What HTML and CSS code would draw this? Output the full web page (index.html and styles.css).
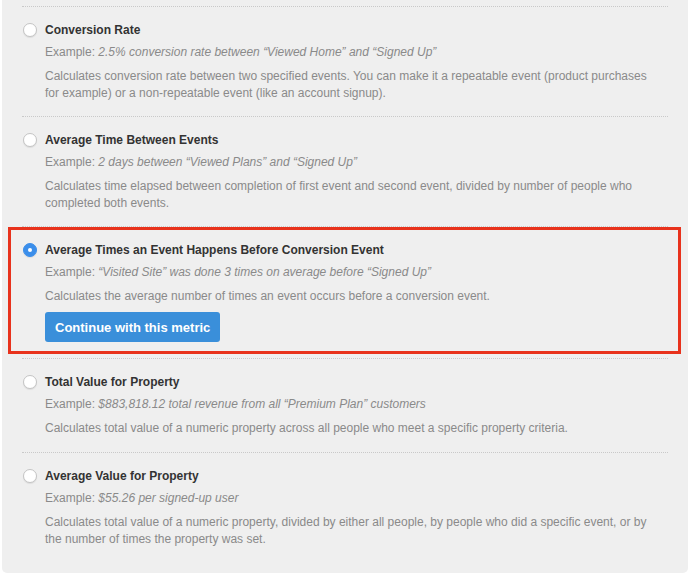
FILE: index.html
```html
<!DOCTYPE html>
<html>
<head>
<meta charset="utf-8">
<link rel="stylesheet" href="styles.css">
</head>
<body>
<div class="panel">
  <div class="item">
    <span class="radio"></span>
    <div class="content">
      <div class="title">Conversion Rate</div>
      <div class="example">Example: <em>2.5% conversion rate between “Viewed Home” and “Signed Up”</em></div>
      <div class="desc">Calculates conversion rate between two specified events. You can make it a repeatable event (product purchases for example) or a non-repeatable event (like an account signup).</div>
    </div>
  </div>
  <div class="item">
    <span class="radio"></span>
    <div class="content">
      <div class="title">Average Time Between Events</div>
      <div class="example">Example: <em>2 days between “Viewed Plans” and “Signed Up”</em></div>
      <div class="desc">Calculates time elapsed between completion of first event and second event, divided by number of people who completed both events.</div>
    </div>
  </div>
  <div class="item item-selected">
    <span class="radio radio-on"></span>
    <div class="content">
      <div class="title">Average Times an Event Happens Before Conversion Event</div>
      <div class="example">Example: <em>“Visited Site” was done 3 times on average before “Signed Up”</em></div>
      <div class="desc">Calculates the average number of times an event occurs before a conversion event.</div>
      <button class="btn">Continue with this metric</button>
    </div>
    <div class="highlight"></div>
  </div>
  <div class="item item-single">
    <span class="radio"></span>
    <div class="content">
      <div class="title">Total Value for Property</div>
      <div class="example">Example: <em>$883,818.12 total revenue from all “Premium Plan” customers</em></div>
      <div class="desc">Calculates total value of a numeric property across all people who meet a specific property criteria.</div>
    </div>
  </div>
  <div class="item">
    <span class="radio"></span>
    <div class="content">
      <div class="title">Average Value for Property</div>
      <div class="example">Example: <em>$55.26 per signed-up user</em></div>
      <div class="desc">Calculates total value of a numeric property, divided by either all people, by people who did a specific event, or by the number of times the property was set.</div>
    </div>
  </div>
</div>
</body>
</html>
```

FILE: styles.css
```css
html, body {
  margin: 0;
  padding: 0;
  background: #ffffff;
}
body {
  font-family: "Liberation Sans", Arial, Helvetica, sans-serif;
  font-size: 12px;
  color: #8a8a8a;
}
.panel {
  margin: 0 4px 0 2px;
  height: 573px;
  box-sizing: border-box;
  background: #efefef;
  border-radius: 0 0 5px 5px;
  padding: 6px 20px 0 20px;
}
.item {
  position: relative;
  display: flex;
  align-items: flex-start;
  border-top: 1px dotted #c9c9c9;
  padding: 15px 0 14px 0;
}
.item-selected {
  padding-bottom: 16px;
}
.item-single {
  padding-bottom: 15px;
}
.radio {
  flex: 0 0 auto;
  width: 12px;
  height: 12px;
  margin: 1px 8px 0 1px;
  border-radius: 50%;
  background: #ffffff;
  border: 1px solid #c4c4c4;
  box-shadow: 0 1px 1px rgba(0, 0, 0, 0.08);
  position: relative;
}
.radio-on {
  background: #3b8eea;
  border-color: #3b8eea;
}
.radio-on::after {
  content: "";
  position: absolute;
  left: 4px;
  top: 4px;
  width: 4px;
  height: 4px;
  border-radius: 50%;
  background: #ffffff;
}
.content {
  flex: 1 1 auto;
  min-width: 0;
}
.title {
  font-weight: bold;
  color: #333333;
  line-height: 16px;
}
.example {
  margin-top: 6px;
  line-height: 16px;
  color: #8a8a8a;
}
.example em {
  font-style: italic;
}
.desc {
  margin-top: 8px;
  line-height: 17px;
  color: #8a8a8a;
  padding-right: 10px;
}
.btn {
  display: block;
  margin-top: 7px;
  height: 30px;
  padding: 0 10px;
  border: none;
  border-radius: 3px;
  background: #3a8fda;
  color: #ffffff;
  font-family: "Liberation Sans", Arial, Helvetica, sans-serif;
  font-size: 13px;
  font-weight: bold;
}
.highlight {
  position: absolute;
  top: 0;
  bottom: 4px;
  left: -14px;
  right: -13px;
  border: 3px solid #e8321c;
  pointer-events: none;
}
```
